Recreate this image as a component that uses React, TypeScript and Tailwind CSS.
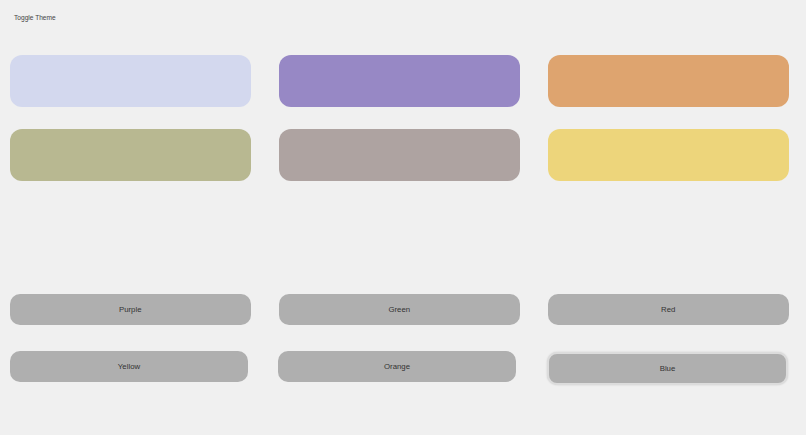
import React from "react";

const swatches = [
  ["bg-[#d3d8ee]", "bg-[#9788c5]", "bg-[#dea46f]"],
  ["bg-[#b8b891]", "bg-[#aea3a1]", "bg-[#edd57b]"],
];

export default function App() {
  return (
    <div className="w-[806px] h-[435px] bg-[#f0f0f0] font-['Liberation_Sans',Arial,sans-serif] overflow-hidden">
      <div className="pt-[14px] pl-[14px] h-[55px]">
        <div className="text-[6.6px] leading-[8px] text-[#444]">Toggle Theme</div>
      </div>
      <div className="flex flex-col gap-[22px] pl-[10px]">
        {swatches.map((row, i) => (
          <div key={i} className="flex gap-[28.5px]">
            {row.map((c, j) => (
              <div key={j} className={`w-[240.5px] h-[52px] rounded-[12px] ${c}`} />
            ))}
          </div>
        ))}
      </div>
      <div className="h-[113px]" />
      <div className="flex gap-[28.5px] pl-[10px]">
        {["Purple", "Green", "Red"].map((t) => (
          <div
            key={t}
            className="w-[240.5px] h-[31px] rounded-[10px] bg-[#afafaf] flex items-center justify-center text-[7.8px] text-[#333]"
          >
            {t}
          </div>
        ))}
      </div>
      <div className="flex items-start pl-[10px] mt-[26px]">
        <div className="w-[238px] h-[31px] rounded-[10px] bg-[#afafaf] flex items-center justify-center text-[7.8px] text-[#333]">
          Yellow
        </div>
        <div className="ml-[30px] w-[238px] h-[31px] rounded-[10px] bg-[#afafaf] flex items-center justify-center text-[7.8px] text-[#333]">
          Orange
        </div>
        <div className="ml-[31px] mt-[1px] w-[241px] h-[33px] rounded-[10px] bg-[#afafaf] border-2 border-[#dcdcdc] shadow-[0_0_2px_rgba(0,0,0,0.15)] flex items-center justify-center text-[7.8px] text-[#333]">
          Blue
        </div>
      </div>
    </div>
  );
}
